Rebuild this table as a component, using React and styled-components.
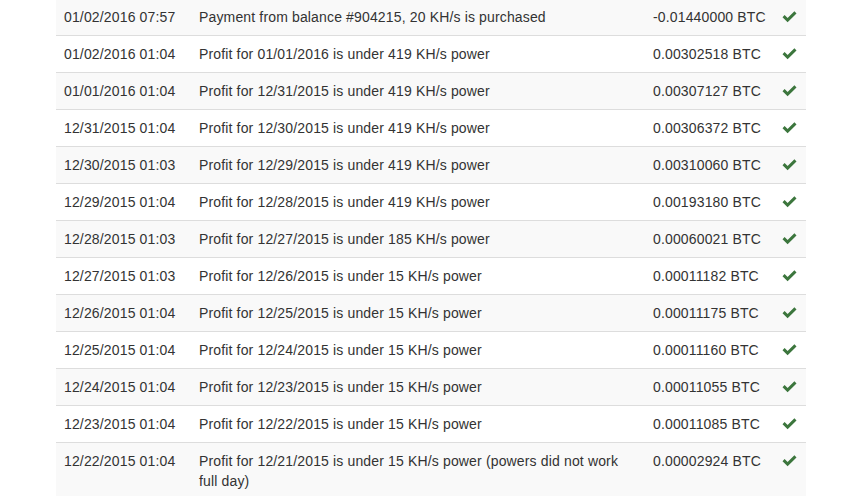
import React from "react";
import styled, { createGlobalStyle } from "styled-components";

const GlobalStyle = createGlobalStyle`
  html, body {
    margin: 0;
    padding: 0;
    background: #fff;
  }
  body {
    font-family: "Liberation Sans", Arial, Helvetica, sans-serif;
    font-size: 14px;
    line-height: 20px;
    letter-spacing: 0.15px;
    color: #333;
    overflow: hidden;
  }
`;

const Wrapper = styled.div`
  width: 750px;
  margin: -2px 0 0 56px;
`;

const Table = styled.table`
  width: 100%;
  border-collapse: collapse;
  border-spacing: 0;
  table-layout: fixed;
`;

const Row = styled.tr`
  background-color: ${(p) => (p.$striped ? "#f9f9f9" : "#fff")};
`;

const Cell = styled.td`
  padding: 8px;
  border-top: 1px solid #ddd;
  vertical-align: top;
  width: ${(p) => p.$width || "auto"};
  white-space: ${(p) => (p.$nowrap ? "nowrap" : "normal")};
`;

const Check = styled.svg`
  display: block;
  margin-top: 4px;
`;

const OkIcon = () => (
  <Check width="15" height="12" viewBox="0 0 15 12">
    <path d="M0.5 6.2 L2.6 4.1 L5.6 7.1 L12.4 0.3 L14.5 2.4 L5.6 11.3 Z" fill="#3c763d" />
  </Check>
);

const rows = [
  ["01/02/2016 07:57", "Payment from balance #904215, 20 KH/s is purchased", "-0.01440000 BTC"],
  ["01/02/2016 01:04", "Profit for 01/01/2016 is under 419 KH/s power", "0.00302518 BTC"],
  ["01/01/2016 01:04", "Profit for 12/31/2015 is under 419 KH/s power", "0.00307127 BTC"],
  ["12/31/2015 01:04", "Profit for 12/30/2015 is under 419 KH/s power", "0.00306372 BTC"],
  ["12/30/2015 01:03", "Profit for 12/29/2015 is under 419 KH/s power", "0.00310060 BTC"],
  ["12/29/2015 01:04", "Profit for 12/28/2015 is under 419 KH/s power", "0.00193180 BTC"],
  ["12/28/2015 01:03", "Profit for 12/27/2015 is under 185 KH/s power", "0.00060021 BTC"],
  ["12/27/2015 01:03", "Profit for 12/26/2015 is under 15 KH/s power", "0.00011182 BTC"],
  ["12/26/2015 01:04", "Profit for 12/25/2015 is under 15 KH/s power", "0.00011175 BTC"],
  ["12/25/2015 01:04", "Profit for 12/24/2015 is under 15 KH/s power", "0.00011160 BTC"],
  ["12/24/2015 01:04", "Profit for 12/23/2015 is under 15 KH/s power", "0.00011055 BTC"],
  ["12/23/2015 01:04", "Profit for 12/22/2015 is under 15 KH/s power", "0.00011085 BTC"],
  ["12/22/2015 01:04", "Profit for 12/21/2015 is under 15 KH/s power (powers did not work full day)", "0.00002924 BTC"],
];

export default function App() {
  return (
    <>
      <GlobalStyle />
      <Wrapper>
        <Table>
          <tbody>
            {rows.map(([date, text, amount], i) => (
              <Row key={date + i} $striped={i % 2 === 0}>
                <Cell $width="119px" $nowrap>{date}</Cell>
                <Cell $width="438px">{text}</Cell>
                <Cell $width="113px" $nowrap>{amount}</Cell>
                <Cell>
                  <OkIcon />
                </Cell>
              </Row>
            ))}
          </tbody>
        </Table>
      </Wrapper>
    </>
  );
}
